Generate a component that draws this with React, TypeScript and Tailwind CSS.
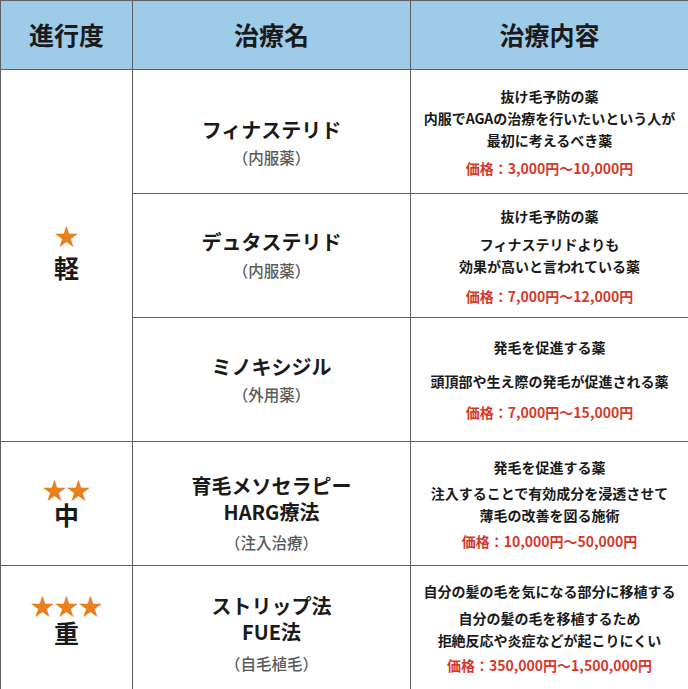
import React from 'react';

type Treatment = {
  names: string[];
  kind: string;
  namePad: string;
  kindGap: string;
  lead: string;
  detail: string[];
  detailGap: string;
  price: string;
  priceGap: string;
};

type Level = {
  stars: string;
  label: string;
  labelGap: string;
  pad: string;
  items: Treatment[];
};

const levels: Level[] = [
  {
    stars: '★',
    label: '軽',
    labelGap: 'mt-[4px]',
    pad: 'pb-[8px]',
    items: [
      {
        names: ['フィナステリド'],
        kind: '（内服薬）',
        namePad: 'pt-[22px]',
        kindGap: 'mt-[2px]',
        lead: '抜け毛予防の薬',
        detail: ['内服でAGAの治療を行いたいという人が', '最初に考えるべき薬'],
        detailGap: 'mt-0',
        price: '価格：3,000円〜10,000円',
        priceGap: 'mt-[6px]',
      },
      {
        names: ['デュタステリド'],
        kind: '（内服薬）',
        namePad: 'pt-0',
        kindGap: 'mt-[3px]',
        lead: '抜け毛予防の薬',
        detail: ['フィナステリドよりも', '効果が高いと言われている薬'],
        detailGap: 'mt-[6px]',
        price: '価格：7,000円〜12,000円',
        priceGap: 'mt-[8px]',
      },
      {
        names: ['ミノキシジル'],
        kind: '（外用薬）',
        namePad: 'pt-0',
        kindGap: 'mt-[2px]',
        lead: '発毛を促進する薬',
        detail: ['頭頂部や生え際の発毛が促進される薬'],
        detailGap: 'mt-[12px]',
        price: '価格：7,000円〜15,000円',
        priceGap: 'mt-[9px]',
      },
    ],
  },
  {
    stars: '★★',
    label: '中',
    labelGap: '-mt-[3px]',
    pad: 'pb-[2px]',
    items: [
      {
        names: ['育毛メソセラピー', 'HARG療法'],
        kind: '（注入治療）',
        namePad: 'pt-[20px]',
        kindGap: 'mt-[5px]',
        lead: '発毛を促進する薬',
        detail: ['注入することで有効成分を浸透させて', '薄毛の改善を図る施術'],
        detailGap: 'mt-[4px]',
        price: '価格：10,000円〜50,000円',
        priceGap: 'mt-[4px]',
      },
    ],
  },
  {
    stars: '★★★',
    label: '重',
    labelGap: '-mt-[1px]',
    pad: 'pb-[16px]',
    items: [
      {
        names: ['ストリップ法', 'FUE法'],
        kind: '（自毛植毛）',
        namePad: 'pt-[12px]',
        kindGap: 'mt-[6px]',
        lead: '自分の髪の毛を気になる部分に移植する',
        detail: ['自分の髪の毛を移植するため', '拒絶反応や炎症などが起こりにくい'],
        detailGap: 'mt-[5px]',
        price: '価格：350,000円〜1,500,000円',
        priceGap: 'mt-[3px]',
      },
    ],
  },
];

const cell = 'border border-[#5f5f5f] text-center align-middle';

export default function App() {
  return (
    <div
      className="w-[688px] h-[689px] overflow-hidden bg-white text-[#1a1a1a]"
      style={{ fontFamily: '"Noto Sans CJK JP", "Noto Sans", sans-serif' }}
    >
      <table className="w-[688px] table-fixed border-collapse">
        <colgroup>
          <col className="w-[132px]" />
          <col className="w-[278px]" />
          <col className="w-[278px]" />
        </colgroup>
        <thead>
          <tr className="h-[69px] bg-[#9dcbe8]">
            <th className={`${cell} text-[25px] font-bold`}>進行度</th>
            <th className={`${cell} text-[25px] font-bold`}>治療名</th>
            <th className={`${cell} text-[25px] font-bold`}>治療内容</th>
          </tr>
        </thead>
        <tbody>
          {levels.map((level) =>
            level.items.map((item, i) => (
              <tr key={item.names[0]} className="h-[124px]">
                {i === 0 && (
                  <td className={`${cell} ${level.pad}`} rowSpan={level.items.length}>
                    <div className="text-[24px] leading-[26px] text-[#e8801f]">{level.stars}</div>
                    <div className={`text-[25px] leading-[30px] font-bold ${level.labelGap}`}>{level.label}</div>
                  </td>
                )}
                <td className={`${cell} ${item.namePad}`}>
                  {item.names.map((n) => (
                    <div key={n} className="text-[20px] leading-[26px] font-bold">{n}</div>
                  ))}
                  <div className={`text-[15.5px] leading-[24px] font-medium text-[#5a5a5a] ${item.kindGap}`}>{item.kind}</div>
                </td>
                <td className={cell}>
                  <div className="text-[14px] leading-[22px] font-bold">{item.lead}</div>
                  <div className={`text-[14px] leading-[22px] font-bold ${item.detailGap}`}>
                    {item.detail.map((d) => (
                      <div key={d}>{d}</div>
                    ))}
                  </div>
                  <div className={`text-[14px] leading-[22px] font-bold text-[#d6392c] ${item.priceGap}`}>{item.price}</div>
                </td>
              </tr>
            ))
          )}
        </tbody>
      </table>
    </div>
  );
}
